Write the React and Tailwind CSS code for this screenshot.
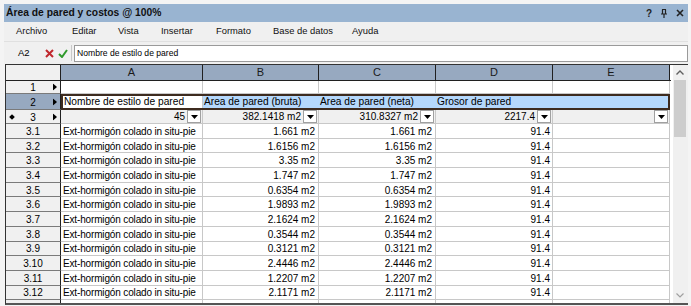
import React from 'react';

const F = { fontFamily: '"Liberation Sans", Arial, sans-serif' };
const COLS = [142, 116, 117, 117, 117];
const LETTERS = ['A', 'B', 'C', 'D', 'E'];
const AREAS = ['1.661', '1.6156', '3.35', '1.747', '0.6354', '1.9893', '2.1624', '0.3544', '0.3121', '2.4446', '1.2207', '2.1171'];
const RH = 14.7;

function Arrow() {
  return (
    <svg width="4" height="7" viewBox="0 0 4 7" className="absolute right-[3px] top-1/2 -translate-y-1/2">
      <path d="M0 0 L4 3.5 L0 7 Z" fill="#000" />
    </svg>
  );
}

function Drop() {
  return (
    <div className="w-[14px] h-[13px] bg-white border border-[#a0a0a0] flex items-center justify-center shrink-0 ml-[2px]">
      <svg width="7" height="4" viewBox="0 0 7 4"><path d="M0 0 H7 L3.5 4 Z" fill="#000" /></svg>
    </div>
  );
}

function RowHead({ label, hl, arrow, dot, h }) {
  return (
    <div
      className={`relative w-[55px] shrink-0 border-r border-r-[#202020] border-b border-b-[#7a7a7a] flex items-center justify-center pt-[1px] ${hl ? 'bg-[#97a9c0]' : 'bg-[#f0f0f0]'}`}
      style={{ height: h }}
    >
      {dot && <span className="absolute left-[4px] top-1/2 -translate-y-1/2 w-[4px] h-[4px] bg-black rotate-45" />}
      {label}
      {arrow && <Arrow />}
    </div>
  );
}

export default function App() {
  return (
    <div className="w-[691px] h-[306px] bg-[#f4f4f4] pt-[4px] pl-[4px] pr-[3px] flex flex-col text-black overflow-hidden" style={F}>
      {/* Title bar */}
      <div className="h-[18px] bg-[#99b4d1] flex items-center justify-between pl-[2px] pr-[4px] shrink-0">
        <span className="text-[10.3px] font-bold text-[#111]">Área de pared y costos @ 100%</span>
        <div className="flex items-center gap-[9px] text-[10px] font-bold text-[#222]">
          <span>?</span>
          <svg width="6" height="9" viewBox="0 0 6 9"><path d="M1 0.5 H5 M1.5 0.5 V5 M4.5 0.5 V5 M0 5 H6 M3 5 V9" stroke="#222" strokeWidth="1.2" fill="none" /></svg>
          <svg width="8" height="8" viewBox="0 0 8 8"><path d="M1 1 L7 7 M7 1 L1 7" stroke="#222" strokeWidth="1.6" /></svg>
        </div>
      </div>
      {/* Menu */}
      <div className="h-[20px] bg-[#f0f0f0] flex items-center pl-[12px] text-[9.4px] text-[#111] border-b border-b-[#e0e0e0] shrink-0">
        <span className="w-[56px]">Archivo</span>
        <span className="w-[46px]">Editar</span>
        <span className="w-[43px]">Vista</span>
        <span className="w-[55px]">Insertar</span>
        <span className="w-[57px]">Formato</span>
        <span className="w-[79px]">Base de datos</span>
        <span>Ayuda</span>
      </div>
      {/* Formula bar */}
      <div className="h-[22px] bg-[#f0f0f0] flex items-center shrink-0">
        <span className="w-[38px] pl-[14px] text-[9.5px]">A2</span>
        <svg width="9" height="9" viewBox="0 0 9 9" className="ml-[3px]"><path d="M1 1 L8 8 M8 1 L1 8" stroke="#c0282d" strokeWidth="2" /></svg>
        <svg width="10" height="9" viewBox="0 0 10 9" className="ml-[4px]"><path d="M1 5 L4 8 L9 1" stroke="#2f9a2c" strokeWidth="2" fill="none" /></svg>
        <div className="ml-[3px] w-[1px] h-[16px] bg-[#c8c8c8]" />
        <div className="ml-[2px] flex-1 h-[17px] bg-white border border-[#9a9a9a] flex items-center pl-[2px] text-[8.6px]">
          Nombre de estilo de pared
        </div>
      </div>
      {/* Grid */}
      <div className="flex-1 flex ml-[1px] border-l border-l-[#333] border-t border-t-[#333] border-b-2 border-b-[#555] bg-white text-[10px] overflow-hidden">
        <div className="flex flex-col w-[665px] shrink-0">
          {/* column letters */}
          <div className="flex h-[16px] border-b border-b-[#202020] shrink-0">
            <div className="w-[55px] bg-[#f0f0f0] border-r border-r-[#202020]" />
            {LETTERS.map((l, i) => (
              <div key={l} className="bg-[#97a9c0] border-r border-r-[#202020] flex items-center justify-center text-[11px] text-[#1a1a1a]" style={{ width: COLS[i] }}>
                {l}
              </div>
            ))}
          </div>
          {/* row 1 */}
          <div className="flex shrink-0">
            <RowHead label="1" arrow h={13} />
            {COLS.map((w, i) => (
              <div key={i} className="border-r border-r-[#c8c8c8] border-b border-b-[#c8c8c8]" style={{ width: w }} />
            ))}
          </div>
          {/* row 2 */}
          <div className="flex shrink-0">
            <RowHead label="2" arrow hl h={16} />
            <div className="flex w-[609px] border-2 border-[#3d2b1f] h-[16px] text-[10.2px]">
              <div className="w-[140px] bg-white border-r border-r-[#c8c8c8] flex items-center pl-[1px]">Nombre de estilo de pared</div>
              <div className="w-[116px] bg-[#b5d8fc] flex items-center pl-[1px]">Area de pared (bruta)</div>
              <div className="w-[117px] bg-[#b5d8fc] flex items-center pl-[1px]">Area de pared (neta)</div>
              <div className="w-[117px] bg-[#b5d8fc] flex items-center pl-[1px]">Grosor de pared</div>
              <div className="flex-1 bg-[#b5d8fc]" />
            </div>
          </div>
          {/* row 3 */}
          <div className="flex shrink-0">
            <RowHead label="3" arrow dot h={14} />
            {['45', '382.1418 m2', '310.8327 m2', '2217.4', ''].map((v, i) => (
              <div key={i} className="bg-[#f0f0f0] border-r border-r-[#c8c8c8] border-b border-b-[#c8c8c8] flex items-center justify-end pr-[1px]" style={{ width: COLS[i], height: 14 }}>
                <span>{v}</span>
                <Drop />
              </div>
            ))}
          </div>
          {/* data rows */}
          {AREAS.map((a, r) => (
            <div key={r} className="flex shrink-0">
              <RowHead label={`3.${r + 1}`} h={RH} />
              <div className="border-r border-r-[#c8c8c8] border-b border-b-[#c8c8c8] flex items-center pl-[2px] pt-[1px] whitespace-nowrap overflow-hidden tracking-[-0.15px]" style={{ width: COLS[0], height: RH }}>
                Ext-hormigón colado in situ-pie
              </div>
              <div className="border-r border-r-[#c8c8c8] border-b border-b-[#c8c8c8] flex items-center justify-end pr-[3px] pt-[1px]" style={{ width: COLS[1], height: RH }}>
                {a} m2
              </div>
              <div className="border-r border-r-[#c8c8c8] border-b border-b-[#c8c8c8] flex items-center justify-end pr-[3px] pt-[1px]" style={{ width: COLS[2], height: RH }}>
                {a} m2
              </div>
              <div className="border-r border-r-[#c8c8c8] border-b border-b-[#c8c8c8] flex items-center justify-end pr-[2px] pt-[1px]" style={{ width: COLS[3], height: RH }}>
                91.4
              </div>
              <div className="border-r border-r-[#c8c8c8] border-b border-b-[#c8c8c8]" style={{ width: COLS[4], height: RH }} />
            </div>
          ))}
          <div className="flex flex-1">
            <div className="w-[55px] bg-[#f0f0f0] border-r border-r-[#202020]" />
            {COLS.map((w, i) => (
              <div key={i} className="border-r border-r-[#c8c8c8]" style={{ width: w }} />
            ))}
          </div>
        </div>
        <div className="w-[2px] bg-white" />
        {/* scrollbar */}
        <div className="w-[17px] bg-[#f0f0f0] flex flex-col items-center">
          <svg width="8" height="5" viewBox="0 0 8 5" className="mt-[5px]"><path d="M0.5 4.5 L4 1 L7.5 4.5" stroke="#606060" strokeWidth="1.4" fill="none" /></svg>
          <div className="mt-[5px] w-[12px] h-[57px] bg-[#cdcdcd]" />
          <div className="flex-1" />
          <svg width="8" height="5" viewBox="0 0 8 5" className="mb-[5px]"><path d="M0.5 0.5 L4 4 L7.5 0.5" stroke="#a0a0a0" strokeWidth="1.2" fill="none" /></svg>
        </div>
      </div>
      <div className="h-[1px]" />
    </div>
  );
}
